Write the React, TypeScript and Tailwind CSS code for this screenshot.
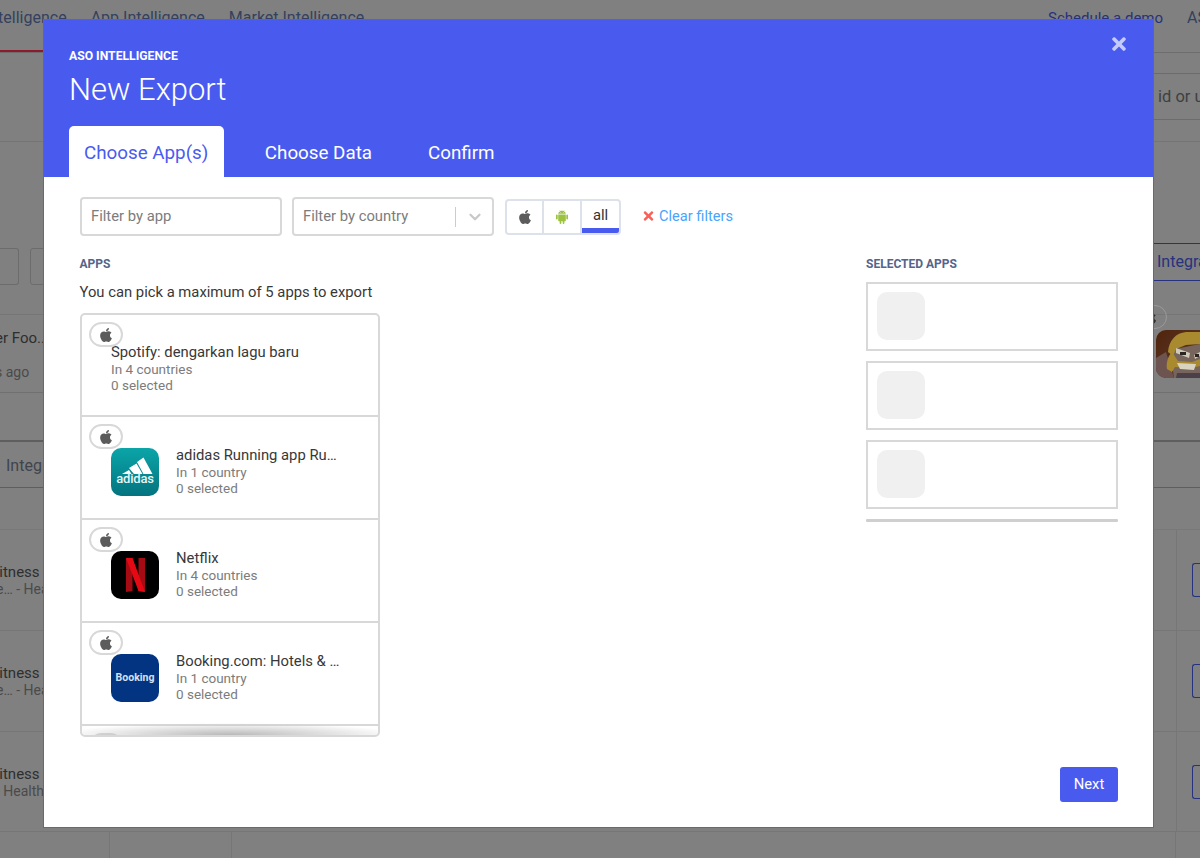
import React from "react";
import { FaApple, FaTimes } from "react-icons/fa";
import { AiFillAndroid } from "react-icons/ai";
import { FiChevronDown } from "react-icons/fi";

const Pill = () => (
  <div className="absolute left-[7px] top-[7px] flex h-[25px] w-[34px] items-center justify-center rounded-full border-2 border-[#d8d8d8] bg-white text-[#5c5c5c]">
    <FaApple className="h-[16px] w-[16px]" />
  </div>
);

const Adidas = () => (
  <div className="relative h-12 w-12 shrink-0 overflow-hidden rounded-[10px] bg-gradient-to-b from-[#0ba5a8] to-[#04747f]">
    <svg viewBox="0 0 48 48" className="absolute inset-0 h-full w-full">
      <path d="M11 26l7-4 2.500 4zM18 20l7.500-4.500 6 10.500h-8.500zM26 14l6.500-4.500 9 16.500h-9z" fill="#fff" />
    </svg>
    <span className="absolute left-0 right-0 top-[23px] text-center text-[13px] font-medium leading-[16px] tracking-[-0.2px] text-[#e6f5f5]">adidas</span>
  </div>
);

const Netflix = () => (
  <div className="h-12 w-12 shrink-0 overflow-hidden rounded-[10px] bg-black">
    <svg viewBox="0 0 48 48" className="h-full w-full">
      <path d="M15 7h6.500v33l-6.500 1z" fill="#a50b12" />
      <path d="M27.500 7h6.500v34l-6.500-1z" fill="#a50b12" />
      <path d="M15 7h6.500l12.500 34-6.500-1z" fill="#e50914" />
    </svg>
  </div>
);

const Booking = () => (
  <div className="flex h-12 w-12 shrink-0 items-center justify-center rounded-[10px] bg-[#023482]">
    <span className="text-[10.500px] font-bold text-[#d5e0f2]">Booking</span>
  </div>
);

const Row = ({ icon, name, sub, first }: { icon?: React.ReactNode; name: string; sub: string; first?: boolean }) => (
  <div className={`relative shrink-0 border-b-2 border-[#d8d8d8] ${first ? "h-[102px]" : "h-[103px]"}`}>
    <Pill />
    <div className={`flex gap-[17px] pl-[29px] ${icon ? "pt-[31px]" : "pt-[28px]"}`}>
      {icon}
      <div className={icon ? "-mt-[2px] min-w-0" : "min-w-0"}>
        <div className="whitespace-nowrap text-[14.800px] leading-[18px] text-[#383838]">{name}</div>
        <div className="text-[13.500px] leading-[16px] text-[#7c7c7c]">{sub}</div>
        <div className="text-[13.500px] leading-[16px] text-[#7c7c7c]">0 selected</div>
      </div>
    </div>
  </div>
);

const Slot = () => (
  <div className="h-[69px] border-2 border-[#d8d8d8] px-[9px] pt-[8px]">
    <div className="h-12 w-12 rounded-[10px] bg-[#f0f0f0]" />
  </div>
);

const Side = ({ top, sub, h, offset }: { top: string; sub: string; h: string; offset: string }) => (
  <div className={`flex ${h} items-center justify-between border-b border-[#767676]`}>
    <div className="pt-[1px]">
      <div className="-ml-[9px] whitespace-nowrap text-[15px] leading-[18px] text-[#2e2e2e]">{top}</div>
      <div className={`whitespace-nowrap text-[14px] leading-[17px] text-[#4a4a4a] ${offset}`}>{sub}</div>
    </div>
    <div className="flex h-full w-[24px] items-center justify-end border-l border-[#767676]">
      <div className="h-[34px] w-[8px] rounded-l-[3px] border-y border-l border-[#27327e]" />
    </div>
  </div>
);

export default function App() {
  return (
    <div className="relative h-[858px] w-[1200px] overflow-hidden bg-[#808080] font-['Roboto',sans-serif]">
      {/* dimmed page behind the dialog */}
      <div className="flex h-[53px] items-start justify-between border-b border-[#6e6e6e] pt-[8px] text-[16px] leading-[20px] text-[#34405e]">
        <div className="flex gap-6 whitespace-nowrap">
          <span className="-ml-[50px] h-[44px] border-b-2 border-[#8c1a2a]">ASO Intelligence</span>
          <span>App Intelligence</span>
          <span>Market Intelligence</span>
          <span className="flex items-center gap-[1px]">
            More ASO Tools
            <span className="mt-[3px] h-0 w-0 border-x-[4px] border-t-[4px] border-x-transparent border-t-[#34405e]" />
          </span>
        </div>
        <div className="flex gap-6 whitespace-nowrap">
          <span className="text-[15px] text-[#27327e]">Schedule a demo</span>
          <span className="-mr-[18px]">ASO</span>
        </div>
      </div>
      <div className="flex h-[89px] flex-col items-end border-b border-[#757575]">
        <div className="mt-[20px] flex h-[47px] w-[60px] items-center overflow-hidden border-y border-[#6c6c6c] pt-[1px] text-[16.500px] text-[#3f3f3f]">
          <span className="whitespace-nowrap pl-[18px]">id or url</span>
        </div>
      </div>
      <div className="flex h-[143px] items-start justify-between">
        <div className="mt-[106px] flex gap-[11px]">
          <div className="h-[37px] w-[19px] rounded-r-[3px] border-y border-r border-[#6c6c6c]" />
          <div className="h-[37px] w-[30px] rounded-[3px] border border-[#6c6c6c]" />
        </div>
        <div className="mt-[101px] h-[38px] w-[46px] overflow-hidden whitespace-nowrap border-y border-[#27327e] pl-[3px] text-[16px] leading-[36px] text-[#27327e]">Integrations</div>
      </div>
      <div className="h-[30px] border-b border-[#767676]" />
      <div className="flex h-[78px] items-start justify-between border-b border-[#707070]">
        <div className="pt-[13px]">
          <div className="-ml-[5px] whitespace-nowrap text-[15px] leading-[20px] text-[#2e2e2e]">er Foo...</div>
          <div className="mt-[14px] -ml-[5px] whitespace-nowrap text-[14px] leading-[20px] text-[#4a4a4a]">s ago</div>
        </div>
        <div className="relative">
          <div className="absolute -left-[23px] -top-[10px] flex h-[24px] w-[34px] items-center justify-center rounded-full border border-[#9a9a9a] text-[#2e2e2e]">
            <FaApple className="h-[15px] w-[15px]" />
          </div>
          <svg viewBox="0 0 44 48" className="mt-[15px] h-12 w-[44px]">
            <defs>
              <linearGradient id="clash" x1="0" y1="0" x2="1" y2="1">
                <stop offset="0" stopColor="#50240c" />
                <stop offset="1" stopColor="#5c3c30" />
              </linearGradient>
            </defs>
            <path d="M10 0h34v48h-34a10 10 0 0 1-10-10v-28a10 10 0 0 1 10-10z" fill="url(#clash)" />
            <path d="M0 28l10-6 8 26h-8a10 10 0 0 1-10-10z" fill="#6e5450" />
            <path d="M14 20l30-6v34h-26z" fill="#77645c" />
            <path d="M12 22c1-12 8-19 18-20h14v12l-14 1-10 4-3 7z" fill="#a98a2e" />
            <path d="M20 18l14 5-1 5-13-5zM38 25l6-3v4l-5 3z" fill="#cfc9b8" />
            <path d="M24 22h6v3h-6zM39 24h4v3h-4z" fill="#2a2420" />
            <path d="M11 39c-1-6 1-13 5-17l6 9 14 1 8-3v7l-8 2-17-1-3 5z" fill="#a98a2e" />
            <path d="M21 33l19 1-2 6-14-1z" fill="#d8d2c0" />
            <path d="M21 43h23v5h-24z" fill="#4c4048" />
          </svg>
        </div>
      </div>
      <div className="mt-[47px] flex h-[48px] items-center border-y border-[#5e5e5e] border-t-2 pt-[2px] text-[16px] text-[#40444f]">
        <span className="whitespace-nowrap pl-[6px]">Integrations</span>
      </div>
      <div className="h-[42px] border-b border-[#6d7b8e]" />
      <Side top="Fitness" sub="e… - Health" h="h-[101px]" offset="-ml-[4px]" />
      <Side top="Fitness" sub="e… - Health" h="h-[101px]" offset="-ml-[4px]" />
      <Side top="Fitness" sub="- Health" h="h-[100px]" offset="-ml-[4px]" />
      <div className="grid h-[26px] grid-cols-[110px_122px_1fr_24px] divide-x divide-[#767676]">
        <div /><div /><div /><div />
      </div>

      {/* dialog */}
      <div className="absolute left-[43px] top-[19px] flex h-[809px] w-[1111px] flex-col border border-[#6a6a6a] bg-white">
        <div className="relative h-[157px] shrink-0 bg-[#495bef] pl-[25px] pt-[29px] text-white">
          <FaTimes className="absolute right-[24px] top-[14px] h-[20px] w-[20px] text-[#c4caf9]" />
          <div className="text-[12.200px] font-bold leading-[14px]">ASO INTELLIGENCE</div>
          <div className="mt-[7px] text-[31px] font-light leading-[39px]">New Export</div>
          <div className="mt-[17px] flex items-start text-[18.800px] leading-[54px]">
            <div className="h-[51px] rounded-t-[5px] bg-white pl-[15px] pr-[16px] text-[#495bef]">Choose App(s)</div>
            <div className="ml-[40.500px]">Choose Data</div>
            <div className="ml-[56px]">Confirm</div>
          </div>
        </div>
        <div className="flex flex-1 flex-col pl-[35px] pr-[35px]">
          <div className="mt-[20px] flex items-center">
            <div className="ml-[1px] flex h-[39px] w-[202px] items-center rounded-[4px] border-2 border-[#d8d8d8] pl-[9px] text-[14.800px] text-[#7c7c7c]">Filter by app</div>
            <div className="ml-[10px] flex h-[39px] w-[202px] items-center rounded-[4px] border-2 border-[#d8d8d8] pl-[9px] text-[14.800px] text-[#7c7c7c]">
              <span className="flex-1">Filter by country</span>
              <span className="h-[20px] w-px bg-[#ccc]" />
              <FiChevronDown strokeWidth={3} className="ml-[10px] mr-[8px] h-[18px] w-[18px] text-[#c8c8c8]" />
            </div>
            <div className="ml-[11px] flex h-[36px] w-[116px] overflow-hidden rounded-[4px] border-2 border-[#dde2ea]">
              <div className="flex w-[37px] items-center justify-center border-r-2 border-[#dde2ea] text-[#5c5c5c]"><FaApple className="h-[16px] w-[16px]" /></div>
              <div className="flex w-[38px] items-center justify-center border-r-2 border-[#dde2ea] text-[#9cc23f]"><AiFillAndroid className="h-[16px] w-[16px]" /></div>
              <div className="flex flex-1 items-center justify-center border-b-[5px] border-[#495bef] pt-[3px] text-[14.800px] text-[#333]">all</div>
            </div>
            <div className="ml-[21px] flex items-center gap-[4px] text-[14.600px] text-[#4aa3ff]">
              <FaTimes className="h-[14px] w-[13px] text-[#f9605a]" />
              <span>Clear filters</span>
            </div>
          </div>

          <div className="mt-[21px] flex flex-1 justify-between">
            <div className="w-[301px]">
              <div className="ml-[0.500px] text-[12px] font-bold leading-[14px] text-[#54648a]">APPS</div>
              <div className="ml-[0.500px] mt-[12px] text-[14.800px] leading-[18px] text-[#383838]">You can pick a maximum of 5 apps to export</div>
              <div className="relative ml-[1px] mt-[12px] h-[424px] w-[300px] overflow-hidden rounded-[5px] border-2 border-[#d8d8d8]">
                <Row first name="Spotify: dengarkan lagu baru" sub="In 4 countries" />
                <Row icon={<Adidas />} name="adidas Running app Ru…" sub="In 1 country" />
                <Row icon={<Netflix />} name="Netflix" sub="In 4 countries" />
                <Row icon={<Booking />} name="Booking.com: Hotels & …" sub="In 1 country" />
                <div className="relative h-[40px]"><Pill /></div>
                <div className="absolute bottom-0 left-0 right-0 h-[12px] bg-[radial-gradient(ellipse_58%_100%_at_50%_100%,#b8b8b8,#ffffff00)]" />
              </div>
            </div>
            <div className="w-[252px]">
              <div className="text-[12px] font-bold leading-[14px] text-[#54648a]">SELECTED APPS</div>
              <div className="mt-[11px] flex flex-col gap-[10px]">
                <Slot />
                <Slot />
                <Slot />
                <div className="h-[3px] rounded-[1px] bg-[#cfcfcf]" />
              </div>
            </div>
          </div>

          <div className="mb-[25px] flex justify-end">
            <div className="flex h-[35px] w-[58px] items-center justify-center rounded-[3px] bg-[#495bef] text-[14.800px] text-white">Next</div>
          </div>
        </div>
      </div>
    </div>
  );
}
